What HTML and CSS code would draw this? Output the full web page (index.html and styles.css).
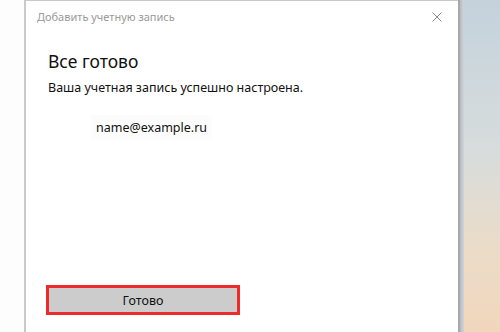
FILE: index.html
```html
<!DOCTYPE html>
<html lang="ru">
<head>
    <meta charset="UTF-8">
    <meta name="viewport" content="width=device-width, initial-scale=1.0">
    <title>Добавить учетную запись</title>
    <link rel="stylesheet" href="styles.css">
</head>
<body>
    <div class="screen">
        <div class="left-strip"></div>

        <div class="dialog">
            <div class="titlebar">
                <span class="title">Добавить учетную запись</span>
                <svg class="close" width="10" height="10" viewBox="0 0 10 10">
                    <path d="M0.5 0.5 L9.5 9.5 M9.5 0.5 L0.5 9.5" stroke="#8a8a8a" stroke-width="1" fill="none"/>
                </svg>
            </div>

            <div class="content">
                <h1>Все готово</h1>
                <p class="message">Ваша учетная запись успешно настроена.</p>
                <div class="account">name@example.ru</div>
            </div>

            <div class="footer">
                <button class="done">Готово</button>
            </div>
        </div>

        <div class="shadow"></div>
        <div class="desktop"></div>
    </div>
</body>
</html>
```

FILE: styles.css
```css
body {
    margin: 0;
    padding: 0;
    font-family: "Noto Sans", "Open Sans", sans-serif;
    background-color: #ffffff;
    overflow: hidden;
}

.screen {
    display: flex;
    width: 500px;
    height: 332px;
}

.left-strip {
    width: 24px;
    background-color: #fdfdfd;
}

.dialog {
    width: 432px;
    background-color: #ffffff;
    border-left: 2px solid #c9c9c9;
    border-top: 1px solid #c9c9c9;
    display: flex;
    flex-direction: column;
}

.titlebar {
    display: flex;
    align-items: center;
    justify-content: space-between;
    height: 31px;
    padding: 0 16px 0 11px;
}

.title {
    font-size: 11px;
    color: #9a9a9a;
}

.close {
    display: block;
}

.content {
    padding: 0 0 0 22px;
    flex: 1;
}

h1 {
    margin: 17px 0 0 0;
    font-size: 17.5px;
    font-weight: 400;
    color: #111111;
    line-height: 25px;
}

.message {
    margin: 5px 0 0 0;
    font-size: 12.5px;
    color: #111111;
    line-height: 18px;
}

.account {
    display: inline-block;
    margin: 18px 0 0 43px;
    padding: 4px 5px;
    font-size: 12.5px;
    color: #111111;
    background-color: #fcfcfc;
}

.footer {
    padding: 0 0 17px 20px;
}

.done {
    width: 194px;
    height: 30px;
    background-color: #cccccc;
    border: 3px solid #ee2b2b;
    font-family: inherit;
    font-size: 12.5px;
    color: #111111;
    padding: 0;
}

.shadow {
    width: 4px;
    border-left: 2px solid #a8a8a8;
    background: linear-gradient(to right, #b8bcc0, #cfd6db);
}

.desktop {
    flex: 1;
    background: linear-gradient(to bottom, #c4d2dc 0%, #d7dcdc 45%, #ebdcc8 75%, #f1d6bc 100%);
}
```
